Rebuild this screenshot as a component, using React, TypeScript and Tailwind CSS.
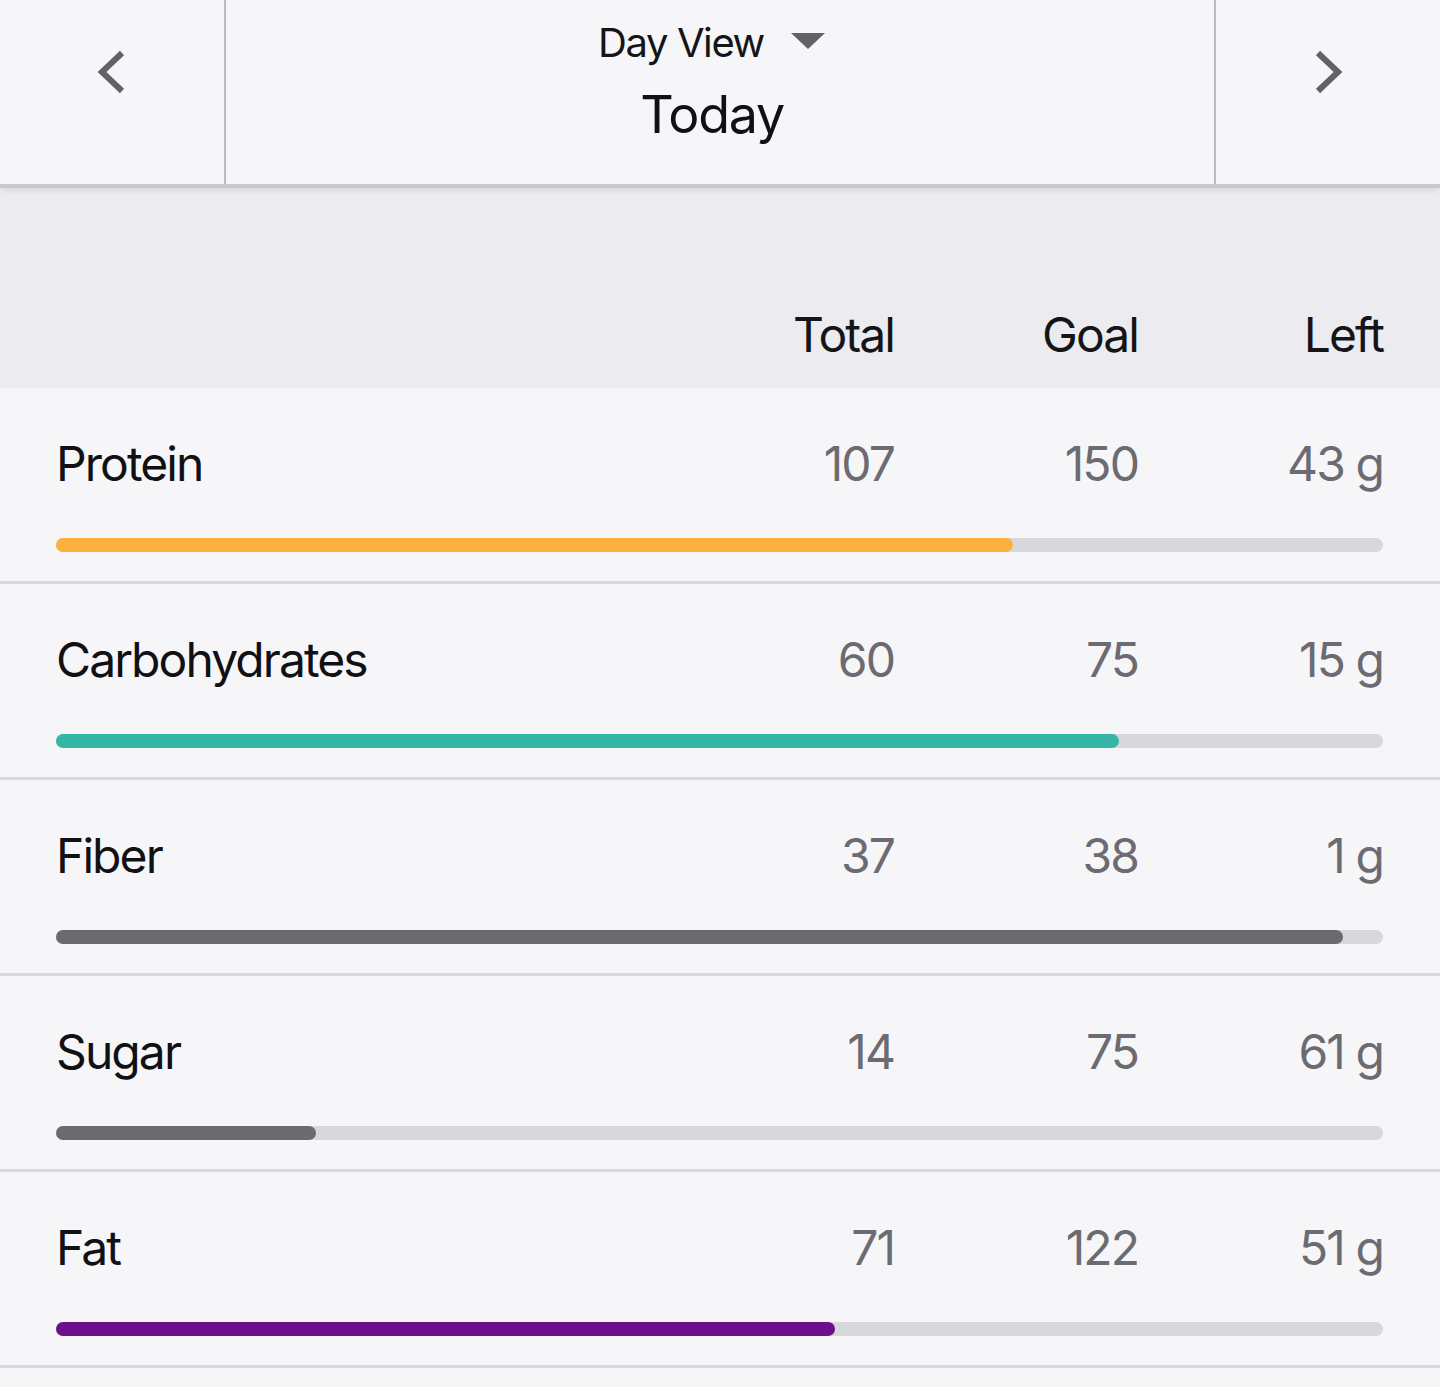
import React from 'react';

const nutrients = [
  { name: 'Protein', total: '107', goal: '150', left: '43 g', pct: 72.1, color: 'bg-[#fbb040]' },
  { name: 'Carbohydrates', total: '60', goal: '75', left: '15 g', pct: 80.1, color: 'bg-[#36b6a6]' },
  { name: 'Fiber', total: '37', goal: '38', left: '1 g', pct: 97.0, color: 'bg-[#6a6a71]' },
  { name: 'Sugar', total: '14', goal: '75', left: '61 g', pct: 19.6, color: 'bg-[#6a6a71]' },
  { name: 'Fat', total: '71', goal: '122', left: '51 g', pct: 58.7, color: 'bg-[#6c0f8b]' },
];

function Chevron({ dir }: { dir: 'left' | 'right' }) {
  return (
    <svg width="30" height="44" viewBox="0 0 30 44" className="text-[#616168]">
      <path
        d={dir === 'left' ? 'M25 3 L5 22 L25 41' : 'M5 3 L25 22 L5 41'}
        fill="none"
        stroke="currentColor"
        strokeWidth="6"
      />
    </svg>
  );
}

function NutrientRow({ n }: { n: (typeof nutrients)[number] }) {
  return (
    <div className="border-b-[3px] border-[#d9d9dd] pl-[56px] pr-[57px] pt-[47px] pb-[29px]">
      <div className="flex items-center text-[48px] leading-[58px] tracking-[-0.04em]">
        <div className="flex-1 text-[#111114]">{n.name}</div>
        <div className="w-[244px] text-right text-[#6b6b71]">{n.total}</div>
        <div className="w-[244px] text-right text-[#6b6b71]">{n.goal}</div>
        <div className="w-[245px] text-right text-[#6b6b71]">{n.left}</div>
      </div>
      <div className="mt-[45px] h-[14px] rounded-full bg-[#d8d8dc]">
        <div className={`h-full rounded-full ${n.color}`} style={{ width: `${n.pct}%` }} />
      </div>
    </div>
  );
}

export default function App() {
  return (
    <div className="min-h-[1387px] w-[1440px] bg-[#f6f6f9]" style={{ fontFamily: 'Inter, "Noto Sans", sans-serif' }}>
      <div className="relative z-10 flex h-[188px] border-b-[4px] border-[#c9c9cd] bg-[#f6f6f9] shadow-[0_3px_6px_rgba(0,0,0,0.08)]">
        <div className="flex w-[226px] justify-center border-r-2 border-[#bcbcc0] pt-[50px]">
          <Chevron dir="left" />
        </div>
        <div className="flex flex-1 flex-col items-center pr-[16px] pt-[19px]">
          <div className="flex items-center text-[40px] leading-[48px] tracking-[-0.035em] text-[#151518]">
            <span>Day View</span>
            <svg width="36" height="18" viewBox="0 0 36 18" className="ml-[26px] mt-[-4px]">
              <path d="M1 1 L35 1 L18 17 Z" fill="#616168" />
            </svg>
          </div>
          <div className="mt-[16px] text-[52px] leading-[63px] tracking-[-0.025em] text-[#111114]">Today</div>
        </div>
        <div className="flex w-[226px] justify-center border-l-2 border-[#bcbcc0] pt-[50px]">
          <Chevron dir="right" />
        </div>
      </div>
      <div className="flex h-[200px] items-end bg-[#ebebf0] pb-[24px] pl-[56px] pr-[57px] text-[48px] leading-[58px] tracking-[-0.04em] text-[#151518]">
        <div className="flex-1" />
        <div className="w-[244px] text-right">Total</div>
        <div className="w-[244px] text-right">Goal</div>
        <div className="w-[245px] text-right">Left</div>
      </div>
      {nutrients.map((n) => (
        <NutrientRow key={n.name} n={n} />
      ))}
    </div>
  );
}
